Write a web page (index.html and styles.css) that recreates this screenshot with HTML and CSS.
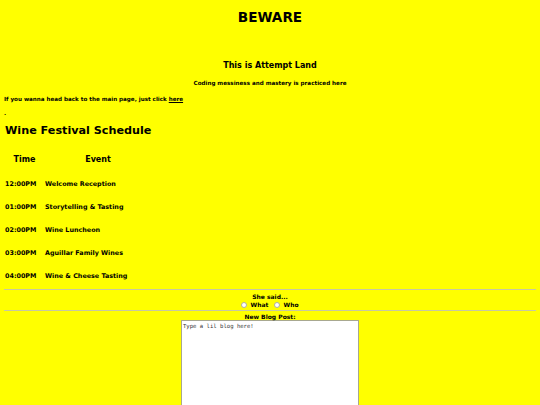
FILE: index.html
```html
<!DOCTYPE html>
<html>
<head>
<meta charset="utf-8">
<link rel="stylesheet" href="styles.css">
</head>
<body>
<div class="page">
  <h1 class="title">BEWARE</h1>
  <h2 class="subtitle">This is Attempt Land</h2>
  <p class="tagline">Coding messiness and mastery is practiced here</p>
  <p class="back">If you wanna head back to the main page, just click <a href="#">here</a></p>
  <p class="dot">.</p>
  <h2 class="sched-title">Wine Festival Schedule</h2>
  <table class="sched">
    <thead>
      <tr><th class="c-time">Time</th><th class="c-event">Event</th></tr>
    </thead>
    <tbody>
      <tr><td>12:00PM</td><td>Welcome Reception</td></tr>
      <tr><td>01:00PM</td><td>Storytelling &amp; Tasting</td></tr>
      <tr><td>02:00PM</td><td>Wine Luncheon</td></tr>
      <tr><td>03:00PM</td><td>Aguillar Family Wines</td></tr>
      <tr><td>04:00PM</td><td>Wine &amp; Cheese Tasting</td></tr>
    </tbody>
  </table>
  <hr class="rule">
  <div class="poll">
    <div class="poll-q">She said...</div>
    <div class="poll-opts">
      <label class="opt"><input type="radio" name="said" class="radio"> What</label>
      <label class="opt"><input type="radio" name="said" class="radio"> Who</label>
    </div>
  </div>
  <hr class="rule rule2">
  <div class="blog">
    <div class="blog-label">New Blog Post:</div>
    <textarea class="blog-box">Type a lil blog here!</textarea>
  </div>
</div>
</body>
</html>
```
FILE: styles.css
```css
html, body {
  margin: 0;
  padding: 0;
  background: #ffff00;
}
body {
  font-family: "DejaVu Sans", Verdana, sans-serif;
  font-weight: bold;
  color: #000;
}
.page {
  padding: 0 4px;
}
.title {
  margin: 9px 0 0;
  font-size: 13.6px;
  line-height: 17px;
  text-align: center;
}
.subtitle {
  margin: 34px 0 0;
  font-size: 8px;
  line-height: 11px;
  text-align: center;
}
.tagline {
  margin: 8px 0 0;
  font-size: 5.6px;
  line-height: 8px;
  text-align: center;
}
.back {
  margin: 8px 0 0;
  font-size: 5.6px;
  line-height: 8px;
}
.back a {
  color: #000;
}
.dot {
  margin: 6px 0 0;
  font-size: 5.6px;
  line-height: 8px;
}
.sched-title {
  margin: 7px 0 0 1px;
  font-size: 11.2px;
  line-height: 14px;
}
.sched {
  margin-top: 17px;
  border-collapse: collapse;
}
.sched th {
  font-size: 8px;
  line-height: 10px;
  text-align: center;
  padding: 0 0 8px;
}
.sched td {
  font-size: 6.4px;
  line-height: 8px;
  padding: 7.4px 0;
  text-align: left;
}
.c-time { width: 41px; }
.c-event { width: 106px; }
.sched td:first-child { padding-left: 1px; }
.rule {
  margin: 2px 0 0;
  border: 0;
  border-top: 1px solid #c8c8a0;
  height: 0;
}
.rule2 { margin-top: 1px; }
.poll {
  text-align: center;
  margin-top: 3px;
}
.poll-q {
  font-size: 6px;
  line-height: 8px;
}
.poll-opts {
  font-size: 6px;
  line-height: 8px;
}
.opt {
  margin: 0 2px;
}
.radio {
  -webkit-appearance: none;
  appearance: none;
  width: 6px;
  height: 6px;
  margin: 0 1px 0 0;
  border: 1px solid #b0b0a0;
  border-radius: 50%;
  background: #fff;
  vertical-align: -1px;
}
.blog {
  text-align: center;
  margin-top: 2px;
}
.blog-label {
  font-size: 6px;
  line-height: 7px;
}
.blog-box {
  display: block;
  margin: 0 auto;
  box-sizing: border-box;
  width: 178px;
  height: 100px;
  padding: 1px;
  border: 1px solid #a8a890;
  background: #fff;
  font-family: "DejaVu Sans Mono", monospace;
  font-weight: normal;
  font-size: 5.6px;
  line-height: 8px;
  color: #333;
  resize: none;
}
```
